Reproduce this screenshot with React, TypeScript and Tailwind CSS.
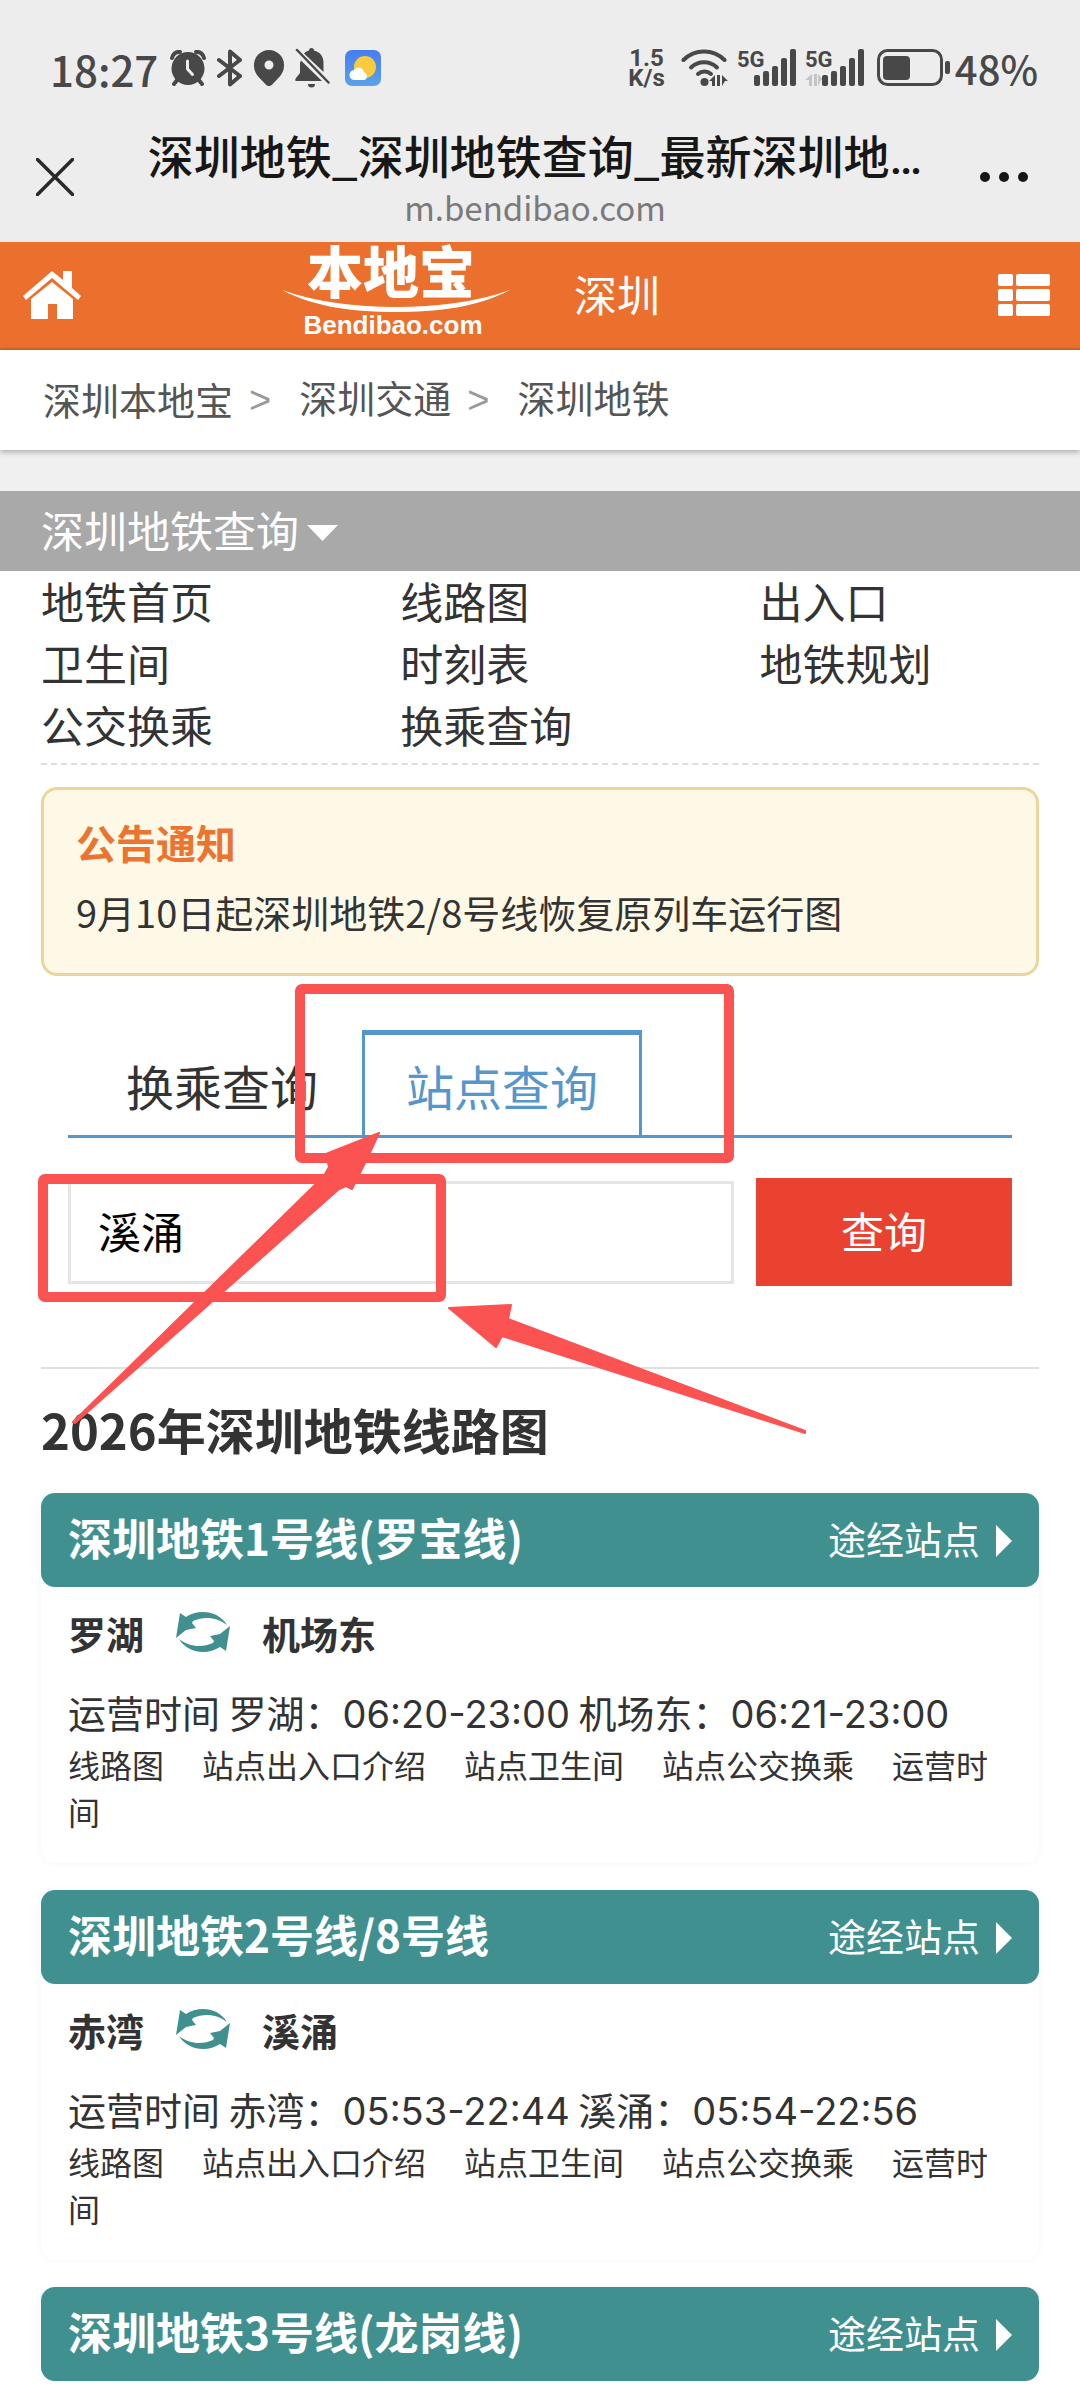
import { useState } from "react";

const menuLinks = [
  "地铁首页",
  "线路图",
  "出入口",
  "卫生间",
  "时刻表",
  "地铁规划",
  "公交换乘",
  "换乘查询",
];

const crumbs = ["深圳本地宝", "深圳交通", "深圳地铁"];

const lineLinks = ["线路图", "站点出入口介绍", "站点卫生间", "站点公交换乘", "运营时间"];

interface MetroLine {
  id: string;
  name: string;
  stops?: { name: string; hours: string }[];
}

const metroLines: MetroLine[] = [
  {
    id: "line-1",
    name: "深圳地铁1号线(罗宝线)",
    stops: [
      { name: "罗湖", hours: "06:20-23:00" },
      { name: "机场东", hours: "06:21-23:00" },
    ],
  },
  {
    id: "line-2",
    name: "深圳地铁2号线/8号线",
    stops: [
      { name: "赤湾", hours: "05:53-22:44" },
      { name: "溪涌", hours: "05:54-22:56" },
    ],
  },
  { id: "line-3", name: "深圳地铁3号线(龙岗线)" },
];

function AlarmIcon() {
  return (
    <svg width="36" height="36" viewBox="0 0 36 36" fill="none" aria-hidden="true">
      <path d="M8 29l-4 5M28 29l4 5" stroke="#484848" strokeWidth="4" strokeLinecap="round" />
      <path d="M2 8a7 7 0 0 1 8-6M34 8a7 7 0 0 0-8-6" stroke="#484848" strokeWidth="4" strokeLinecap="round" />
      <circle cx="18" cy="18.500" r="16.500" fill="#484848" />
      <path d="M17.500 11v8l5 5.500" stroke="#ededed" strokeWidth="3" strokeLinecap="round" strokeLinejoin="round" />
    </svg>
  );
}

function BluetoothIcon() {
  return (
    <svg width="26" height="38" viewBox="0 0 26 38" fill="none" aria-hidden="true">
      <path
        d="M2 11l21 16-10 8.500V2.500L23 11 2 27"
        stroke="#484848"
        strokeWidth="4"
        strokeLinecap="round"
        strokeLinejoin="round"
      />
    </svg>
  );
}

function PinIcon() {
  return (
    <svg width="30" height="36" viewBox="0 0 30 36" aria-hidden="true">
      <path
        fillRule="evenodd"
        fill="#484848"
        d="M15 0a15 15 0 0 1 15 15.500c0 6-3 10-7 14l-5 5.200a4 4 0 0 1-6 0L7 29.500c-4-4-7-8-7-14A15 15 0 0 1 15 0zm0 10.500a4.500 4.500 0 1 0 0 9 4.500 4.500 0 0 0 0-9z"
      />
    </svg>
  );
}

function BellOffIcon() {
  return (
    <svg width="35" height="40" viewBox="0 0 35 40" aria-hidden="true">
      <g fill="#484848">
        <path d="M6 12.500L27 33H1c-1 0-1-2 0-3l4-5V15z" />
        <path d="M9 5.500c1.500-1.500 3-2.500 5-3a2.500 2.500 0 0 1 5 0c6 1.500 9.500 6 9.500 12V24z" />
        <path d="M13 36h7a3.500 3.500 0 0 1-7 0z" />
      </g>
      <path d="M2 2l31.500 32.500" stroke="#484848" strokeWidth="2.500" strokeLinecap="round" />
    </svg>
  );
}

function WeatherIcon() {
  return (
    <svg width="36" height="36" viewBox="0 0 36 36" aria-hidden="true">
      <defs>
        <linearGradient id="sky" x1="0" y1="0" x2="0" y2="1">
          <stop offset="0" stopColor="#477cf0" />
          <stop offset="1" stopColor="#5aa3ea" />
        </linearGradient>
      </defs>
      <rect width="36" height="36" rx="7" fill="url(#sky)" />
      <circle cx="20" cy="17" r="11" fill="#fbcb3c" />
      <path d="M10 30a5 5 0 0 1-1-10 5.500 5.500 0 0 1 10 2 4.500 4.500 0 0 1 1 8z" fill="#fff" />
    </svg>
  );
}

function WifiIcon() {
  return (
    <svg width="48" height="38" viewBox="0 0 48 38" fill="none" aria-hidden="true">
      <g stroke="#484848" strokeWidth="4" strokeLinecap="round">
        <path d="M2.500 11a29 29 0 0 1 41 0" />
        <path d="M10 18.500a19 19 0 0 1 26 0" />
        <path d="M17 25a10 10 0 0 1 13 0" />
      </g>
      <circle cx="23.500" cy="33" r="4" fill="#484848" />
      <path d="M34 26v11h-3v-5h-3zM36 26h3v11h-3zM41 26l6 6h-3l-3 5z" fill="#484848" />
    </svg>
  );
}

function SignalIcon({ idle = false }: { idle?: boolean }) {
  return (
    <svg className="overflow-visible" width="60" height="38" viewBox="0 0 60 38" aria-hidden="true">
      <text x="0" y="18" fontFamily="Roboto, sans-serif" fontWeight="700" fontSize="22" fill="#484848">
        5G
      </text>
      {idle && <path d="M7 25v12H4v-6H0zM9 25h3v12H9zM13 25l5 6h-2l-3 6z" fill="#c4c4c4" />}
      <g fill="#484848">
        <rect x="17" y="26" width="6" height="11" rx="2" />
        <rect x="26" y="22" width="6" height="15" rx="2" />
        <rect x="35" y="17" width="6" height="20" rx="2" />
        <rect x="44" y="9" width="6" height="28" rx="2" />
        <rect x="53" y="0" width="6" height="37" rx="2" />
      </g>
    </svg>
  );
}

function BatteryIcon() {
  return (
    <svg width="74" height="38" viewBox="0 0 74 38" aria-hidden="true">
      <rect x="1.500" y="1.500" width="63" height="34" rx="9" fill="none" stroke="#484848" strokeWidth="3" />
      <rect x="6" y="7" width="27" height="24" rx="4" fill="#484848" />
      <rect x="68" y="12" width="5" height="13" rx="2" fill="#484848" />
    </svg>
  );
}

function StatusBar() {
  return (
    <div className="flex h-13 items-center justify-between pb-1 pl-[50px] pr-[42px] text-[42px] font-medium text-[#484848]">
      <div className="flex items-center">
        <span className="mr-3">18:27</span>
        <div className="flex items-center gap-[11px]">
          <AlarmIcon />
          <BluetoothIcon />
          <PinIcon />
          <BellOffIcon />
          <span className="ml-1">
            <WeatherIcon />
          </span>
        </div>
      </div>
      <div className="flex items-center">
        <div className="mr-4 text-center font-[Roboto,sans-serif] text-[24px] font-bold leading-5">
          <div>1.5</div>
          <div>K/s</div>
        </div>
        <div className="mr-1 flex items-center gap-2">
          <WifiIcon />
          <SignalIcon />
          <SignalIcon idle />
          <span className="ml-1">
            <BatteryIcon />
          </span>
        </div>
        <span className="text-[40px]">48%</span>
      </div>
    </div>
  );
}

function BrowserHeader() {
  return (
    <header className="bg-[#ededed] pb-3 pt-11">
      <StatusBar />
      <div className="mt-7 flex items-center justify-between pl-8 pr-12">
        <button type="button" aria-label="关闭" className="p-1">
          <svg width="38" height="38" viewBox="0 0 38 38" aria-hidden="true">
            <path d="M1.500 1.500l35 35M36.500 1.500l-35 35" stroke="#2a2a2a" strokeWidth="3.500" strokeLinecap="round" />
          </svg>
        </button>
        <div className="pl-4 text-center">
          <div className="whitespace-nowrap text-[46px] font-medium leading-[60px] text-[#171717]">
            深圳地铁_深圳地铁查询_最新深圳地
            <span className="font-[Roboto,sans-serif] leading-none">…</span>
          </div>
          <div className="text-[33px] leading-[46px] text-[#7a7a7a]">m.bendibao.com</div>
        </div>
        <button type="button" aria-label="更多" className="p-1">
          <svg width="48" height="10" viewBox="0 0 48 10" fill="#171717" aria-hidden="true">
            <circle cx="5" cy="5" r="5" />
            <circle cx="24" cy="5" r="5" />
            <circle cx="43" cy="5" r="5" />
          </svg>
        </button>
      </div>
    </header>
  );
}

function Logo() {
  return (
    <svg className="overflow-visible" width="228" height="96" viewBox="0 0 228 96" fill="#fff" role="img" aria-label="本地宝">
      <text
        x="109"
        y="46"
        textAnchor="middle"
        fontFamily="'Noto Sans CJK SC', sans-serif"
        fontWeight="900"
        fontSize="56"
      >
        本地宝
      </text>
      <path d="M0 43c34 12 74 17 114 17s80-5 114-17c-34 18-74 22-114 22S34 61 0 43z" />
      <text x="111" y="87" textAnchor="middle" fontFamily="'Liberation Sans', sans-serif" fontWeight="700" fontSize="26">
        Bendibao.com
      </text>
    </svg>
  );
}

function SiteHeader() {
  return (
    <div className="flex h-27 items-center border-b-2 border-[#d0682f] bg-[#ec702d] pl-[22px] pr-[29px]">
      <a href="#home" aria-label="首页">
        <svg width="60" height="50" viewBox="0 0 60 50" fill="#fff" aria-hidden="true">
          <path d="M30 1l11 9V1h9v17l9 8-3 4L30 8 4 30l-3-4z" />
          <path d="M30 12l21 17v20H35V34h-9v15H9V29z" />
        </svg>
      </a>
      <a href="#bendibao" className="ml-[200px]">
        <Logo />
      </a>
      <a href="#shenzhen" className="ml-16 pb-1 text-[43px] text-white">
        深圳
      </a>
      <button type="button" aria-label="菜单" className="ml-auto">
        <svg width="54" height="44" viewBox="0 0 54 44" fill="#fff" aria-hidden="true">
          <rect x="1" y="1" width="15" height="12" rx="2" />
          <rect x="19" y="1" width="34" height="12" rx="2" />
          <rect x="1" y="16" width="15" height="12" rx="2" />
          <rect x="19" y="16" width="34" height="12" rx="2" />
          <rect x="1" y="31" width="15" height="12" rx="2" />
          <rect x="19" y="31" width="34" height="12" rx="2" />
        </svg>
      </button>
    </div>
  );
}

function SwapIcon() {
  return (
    <svg width="54" height="42" viewBox="0 0 54 42" fill="#419090" aria-hidden="true">
      <path d="M4 2l6 4C22-2 42-1 51 14 41 6 28 5 17 10l-1 2 4 5-10 2L0 27z" />
      <path d="M50 40l-6-4C32 44 12 43 3 28c10 8 23 9 34 4l1-2-4-5 10-2 10-8z" />
    </svg>
  );
}

function LineCard({ line }: { line: MetroLine }) {
  return (
    <section className="rounded-[14px] shadow-[0_0_6px_rgba(0,0,0,0.05)]">
      <div className="flex h-[94px] items-center justify-between rounded-[14px] bg-[#419090] px-[27px] pb-1.5 text-white">
        <h3 className="text-[44px] font-bold">{line.name}</h3>
        <a href={`#${line.id}`} className="flex items-center gap-4 text-[38px]">
          途经站点
          <svg className="mt-2" width="16" height="32" viewBox="0 0 16 32" fill="#fff" aria-hidden="true">
            <path d="M0 0l16 16L0 32z" />
          </svg>
        </a>
      </div>
      {line.stops && (
        <div className="px-[27px] pb-7 pt-[18px]">
          <div className="flex h-[54px] items-center text-[38px] font-bold">
            <span>{line.stops[0].name}</span>
            <span className="mx-8">
              <SwapIcon />
            </span>
            <span>{line.stops[1].name}</span>
          </div>
          <p className="mt-[26px] text-[38px] leading-[54px]">
            运营时间
            {line.stops.map((stop) => (
              <span key={stop.name}>
                {" "}
                {stop.name}：<span className="font-[Inter,sans-serif]">{stop.hours}</span>
              </span>
            ))}
          </p>
          <p className="text-[32px] leading-[47px]">
            {lineLinks.map((label) => (
              <a key={label} href={`#${line.id}`} className="mr-[38px]">
                {label}
              </a>
            ))}
          </p>
        </div>
      )}
    </section>
  );
}

// red boxes and arrows pointing at the station tab and the keyword field
function Annotations() {
  return (
    <svg
      className="pointer-events-none absolute left-0 top-0"
      width="820"
      height="470"
      viewBox="0 0 820 470"
      aria-hidden="true"
    >
      <g fill="none" stroke="#fb5252" strokeWidth="10">
        <rect x="300" y="13" width="429" height="169" rx="2" />
        <rect x="43" y="203" width="398" height="118" rx="2" />
      </g>
      <g fill="#fb5252" stroke="#fb5252" strokeWidth="2" strokeLinejoin="round">
        <path d="M379 157l-53 21 3 13-5 9L73 446l2 1L339 213l7-3 6 3 13-26z" />
        <path d="M449 332l62-3-3 14 297 112v2L502 360l-6 11z" />
      </g>
    </svg>
  );
}

export default function App() {
  const [tab, setTab] = useState("station");
  const [keyword, setKeyword] = useState("溪涌");

  const tabClass = (id: string) =>
    tab === id
      ? "border-x-[3px] border-t-[5px] border-[#5596cb] text-[#5596cb]"
      : "border-x-[3px] border-t-[5px] border-transparent";

  return (
    <div className="overflow-hidden bg-white font-['Noto_Sans_CJK_SC',sans-serif] text-[#333]" lang="zh-CN">
      <BrowserHeader />
      <SiteHeader />

      <div className="bg-[#f0f0f0] pb-[41px]">
        <nav className="flex h-25 items-center bg-white px-[43px] pb-1 text-[38px] text-[#555] shadow-[0_2px_6px_rgba(0,0,0,0.3)]">
          {crumbs.map((crumb, i) => (
            <span key={crumb}>
              {i > 0 && <span className="ml-4 mr-7 font-['Liberation_Sans',sans-serif] text-[#999]">&gt;</span>}
              <a href="#crumb">{crumb}</a>
            </span>
          ))}
        </nav>
      </div>

      <button
        type="button"
        className="flex h-20 w-full items-center gap-2 bg-[#a9a9a9] px-[41px] pb-1 text-[43px] text-white"
      >
        深圳地铁查询
        <svg className="mt-2" width="31" height="16" viewBox="0 0 31 16" fill="#fff" aria-hidden="true">
          <path d="M0 0h31L15.500 16z" />
        </svg>
      </button>

      <main className="px-[41px] pb-[5px]">
        <nav className="grid grid-cols-[36%_36%_28%] border-b-2 border-dashed border-[#ddd] pb-1.5 text-[43px] leading-[62px]">
          {menuLinks.map((label) => (
            <a key={label} href="#menu" className="-mt-0.5 mb-0.5">
              {label}
            </a>
          ))}
        </nav>

        <section className="mt-[22px] rounded-[16px] border-3 border-[#ead69c] bg-[#fef8e6] px-8 pb-[29px] pt-[22px]">
          <h2 className="text-[40px] font-bold leading-[60px] text-[#ea7430]">公告通知</h2>
          <p className="mt-2 text-[38px] leading-[64px]">
            <a href="#notice">9月10日起深圳地铁2/8号线恢复原列车运行图</a>
          </p>
        </section>

        <div className="relative -mx-[41px] px-[41px] pt-[54px]">
          <div className="px-[27px]">
            <div role="tablist" className="flex border-b-3 border-[#5596cb] pl-3.5 text-[48px]">
              <button
                type="button"
                role="tab"
                aria-selected={tab === "transfer"}
                onClick={() => setTab("transfer")}
                className={`h-[105px] px-[41px] ${tabClass("transfer")}`}
              >
                换乘查询
              </button>
              <button
                type="button"
                role="tab"
                aria-selected={tab === "station"}
                onClick={() => setTab("station")}
                className={`h-[105px] px-[41px] ${tabClass("station")}`}
              >
                站点查询
              </button>
            </div>
            <form
              className="mt-10 flex items-center gap-[22px] text-[43px]"
              onSubmit={(e) => e.preventDefault()}
            >
              <input
                type="text"
                aria-label="站点名称"
                value={keyword}
                onChange={(e) => setKeyword(e.target.value)}
                className="h-[103px] min-w-0 flex-1 border-3 border-[#e5e5e5] px-[27px] pb-1 text-black outline-none"
              />
              <button type="submit" className="h-27 w-64 bg-[#ea4231] pb-1 text-white">
                查询
              </button>
            </form>
          </div>
          <hr className="mt-[81px] border-t-2 border-[#e0e0e0]" />
          <h2 className="pb-[30px] pt-[26px] text-[49px] font-bold leading-[68px]">2026年深圳地铁线路图</h2>
          <Annotations />
        </div>

        <div className="flex flex-col gap-[27px]">
          {metroLines.map((line) => (
            <LineCard key={line.id} line={line} />
          ))}
        </div>
      </main>
    </div>
  );
}
